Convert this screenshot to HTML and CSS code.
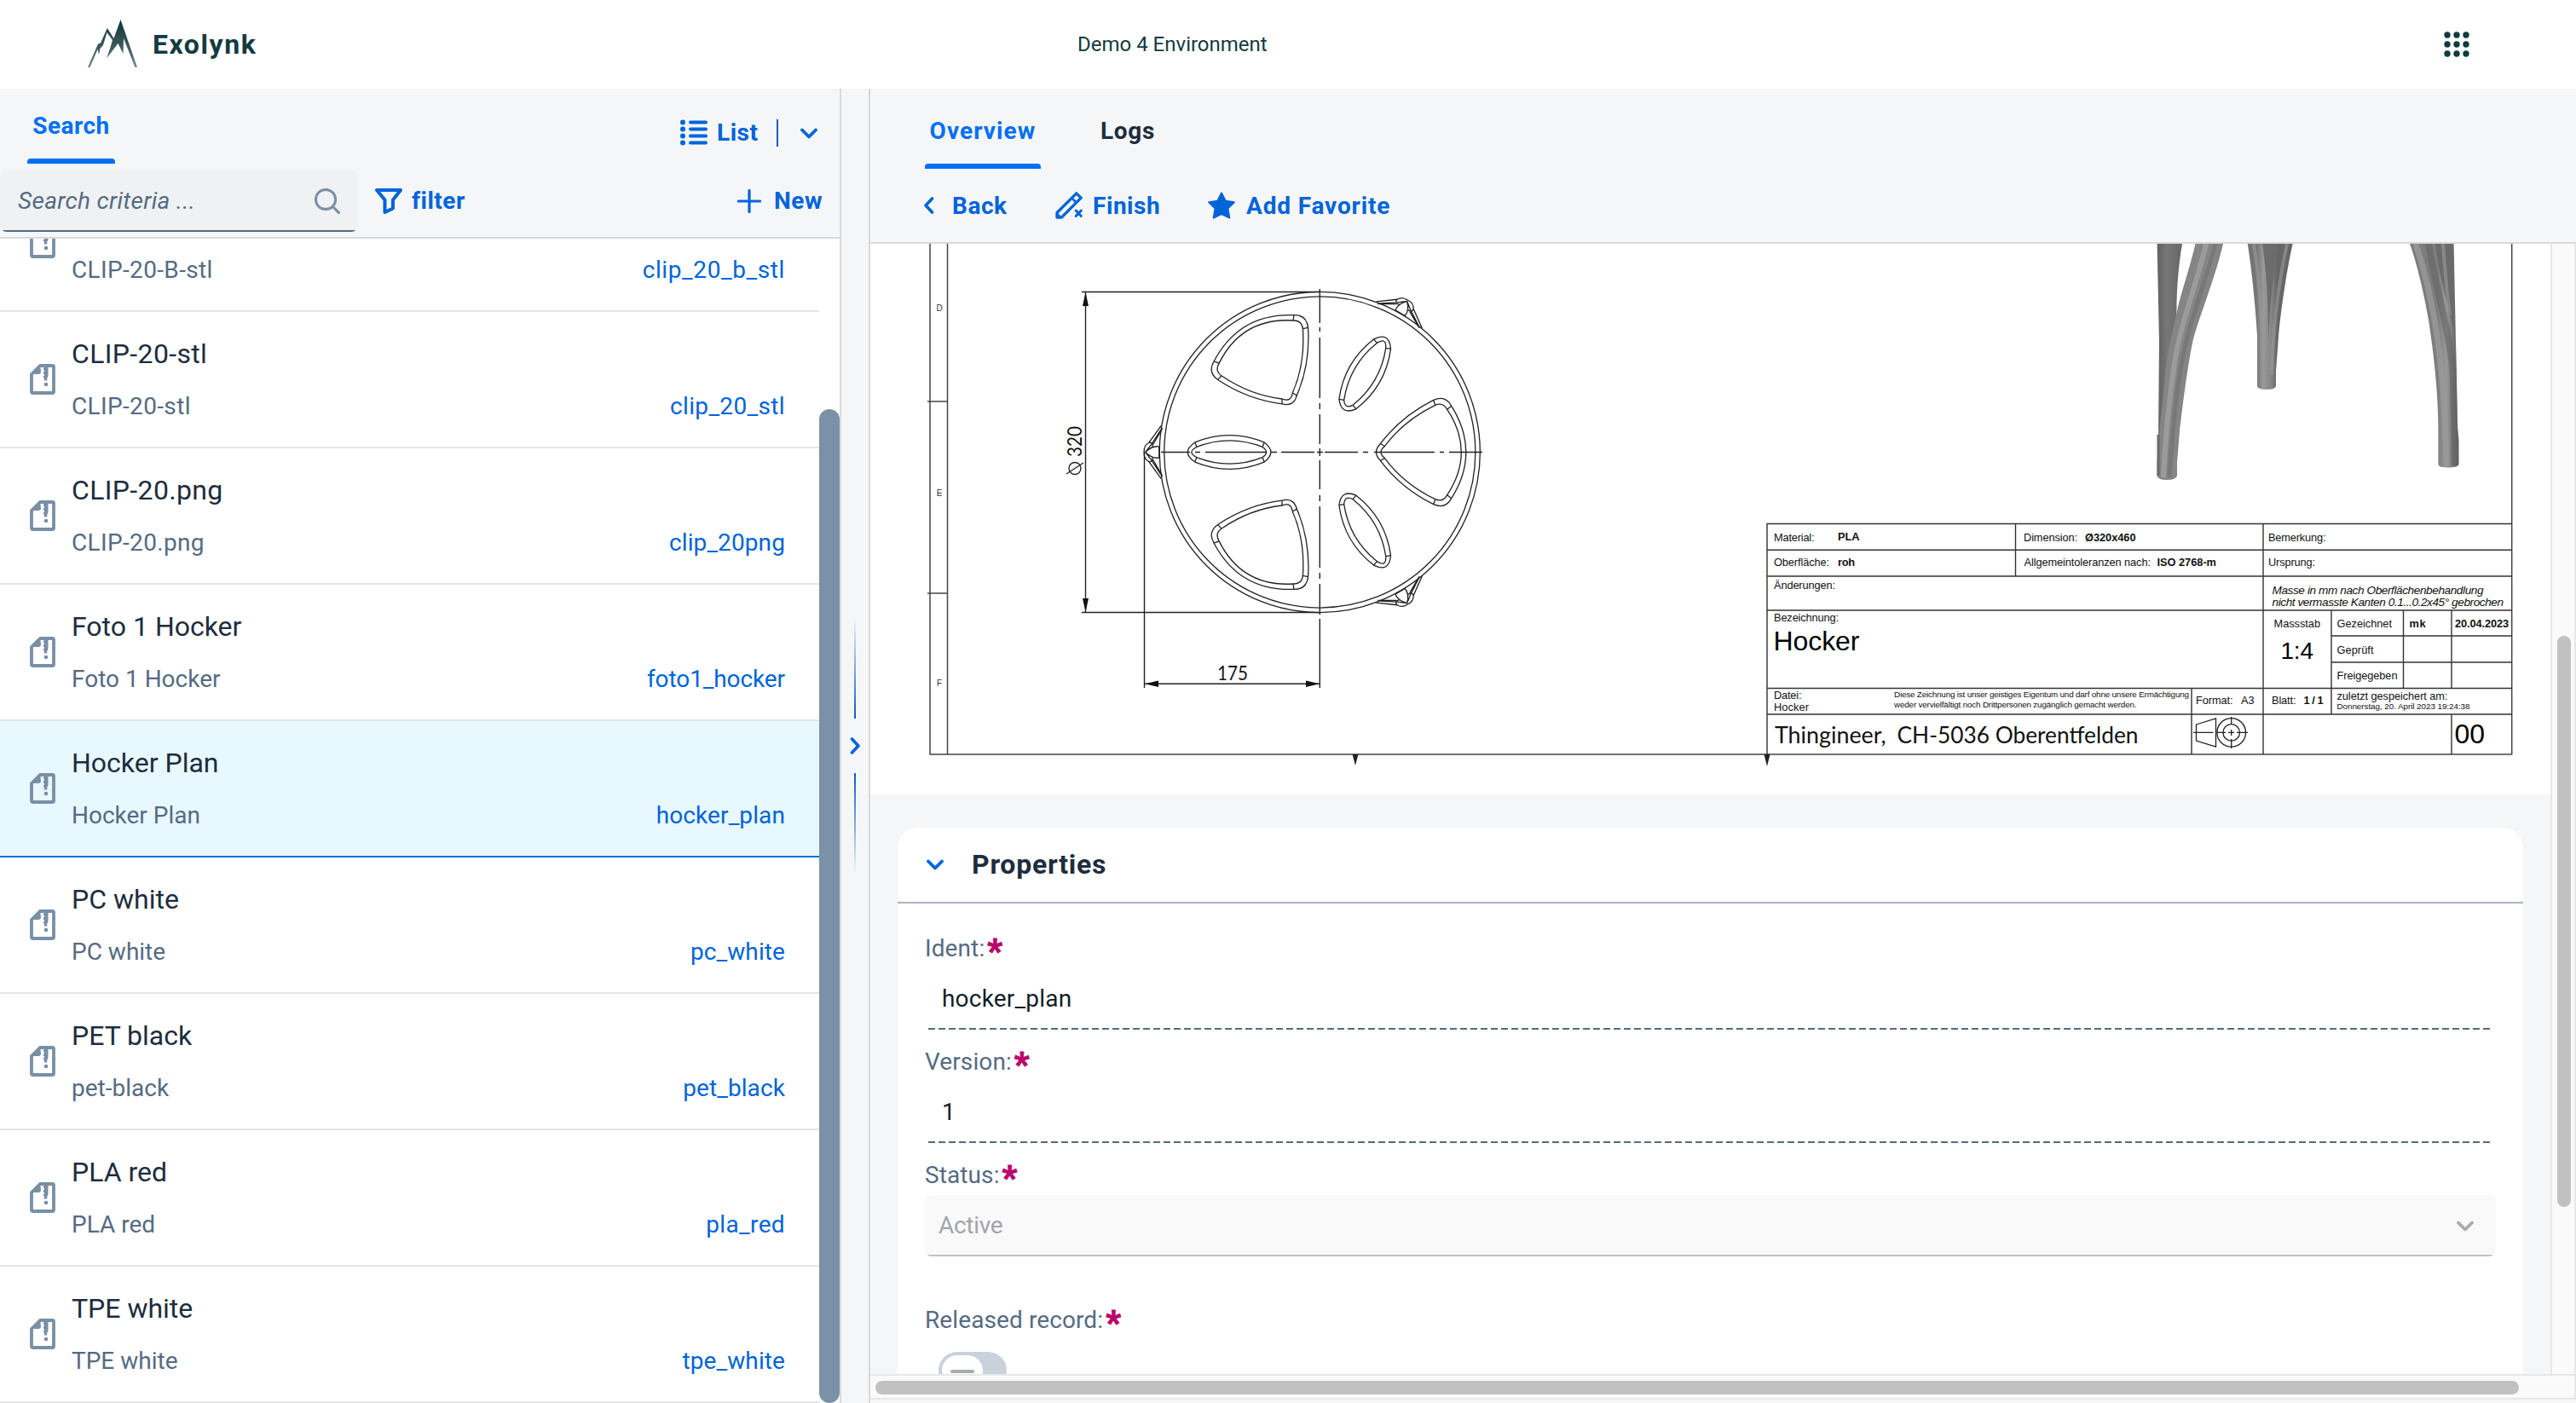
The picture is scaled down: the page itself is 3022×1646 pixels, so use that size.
FILE: index.html
```
<!DOCTYPE html>
<html lang="en">
<head>
<meta charset="utf-8">
<title>Exolynk</title>
<link rel="stylesheet" href="styles.css">
</head>
<body>
<svg class="defs" width="0" height="0" aria-hidden="true">
  <symbol id="i-file" viewBox="0 0 30 36">
    <path d="M12 2H26.5Q28 2 28 3.500V32.500Q28 34 26.500 34H3.500Q2 34 2 32.500V12Z" fill="none" stroke="#788fa6" stroke-width="3.800" stroke-linejoin="round"/>
    <path d="M12 1L1 12H10Q13 12 13 9Z" fill="#788fa6"/>
    <path d="M17 4h2v2h2v2h-2v2h2v2h-2v2h2v2h-2v3h-2v-3h-1v-2h1v-2h-1V9h1V7h-1V5z" fill="#788fa6"/>
    <path d="M19.500 4V14.500" stroke="#788fa6" stroke-width="4"/>
    <path d="M18.500 14V19.500" stroke="#788fa6" stroke-width="3.500"/>
    <circle cx="19" cy="24" r="2.300" fill="#788fa6"/>
  </symbol>
  <symbol id="i-down" viewBox="0 0 20 13"><path d="M2 2.500L10 10.500L18 2.500" fill="none" stroke="currentColor" stroke-width="3.800" stroke-linecap="round" stroke-linejoin="round"/></symbol>
</svg>

<header class="shell">
  <a class="brand">
    <svg class="logo" viewBox="0 0 58 58">
      <defs><linearGradient id="lg" x1="0" y1="0" x2="0" y2="1"><stop offset="0" stop-color="#0d3438"/><stop offset=".6" stop-color="#3f5d60"/><stop offset="1" stop-color="#6f8786"/></linearGradient></defs>
      <path d="M38.500 0L58 56H55.500L42 22L41.500 40L35.500 28L22 45.500L26 34L29 24L22.500 15L18 30L14.500 34L13 41L11.500 35L2.500 56H0L12 28.500L15 27.500L22.800 10L30.500 22Z" fill="url(#lg)"/>
    </svg>
    <span class="brand-name">Exolynk</span>
  </a>
  <span class="env">Demo 4 Environment</span>
  <svg class="apps" viewBox="0 0 30 30" fill="#123b40"><circle cx="4" cy="4" r="3.700"/><circle cx="15" cy="4" r="3.700"/><circle cx="26" cy="4" r="3.700"/><circle cx="4" cy="15" r="3.700"/><circle cx="15" cy="15" r="3.700"/><circle cx="26" cy="15" r="3.700"/><circle cx="4" cy="26" r="3.700"/><circle cx="15" cy="26" r="3.700"/><circle cx="26" cy="26" r="3.700"/></svg>
</header>

<main class="layout">
  <aside class="master">
    <div class="master-head">
      <div class="tabrow">
        <a class="tab tab-search on">Search</a>
        <div class="viewmode">
          <svg class="ic32" viewBox="0 0 32 32"><g fill="#0064d9"><circle cx="3" cy="3.500" r="3"/><circle cx="3" cy="11.500" r="3"/><circle cx="3" cy="19.500" r="3"/><circle cx="3" cy="27.500" r="3"/></g><path d="M12 3.500H30M12 11.500H30M12 19.500H30M12 27.500H30" stroke="#0064d9" stroke-width="4" stroke-linecap="round"/></svg>
          <span class="b">List</span>
          <i class="split"></i>
          <svg class="down"><use href="#i-down"/></svg>
        </div>
      </div>
      <div class="searchrow">
        <div class="searchbox">
          <span>Search criteria ...</span>
          <svg class="mag" viewBox="0 0 30 30" fill="none" stroke="#788fa6" stroke-width="3"><circle cx="13" cy="13" r="11.600"/><path d="M21.500 21.500L28.600 28.600" stroke-linecap="round"/></svg>
        </div>
        <svg class="ic32" viewBox="0 0 32 32"><path d="M2 3H30L21 14.500V24.500L11.500 29V14.500Z" fill="none" stroke="#0064d9" stroke-width="4" stroke-linejoin="round"/></svg>
        <span class="b filter">filter</span>
        <svg class="plus" viewBox="0 0 28 28"><path d="M1.500 14H26.500M14 1.500V26.500" stroke="#0064d9" stroke-width="3.200" stroke-linecap="round"/></svg>
        <span class="b new">New</span>
      </div>
    </div>
    <div class="list-wrap">
      <ul class="list">
        <li class="row"><svg class="file"><use href="#i-file"/></svg><div class="txt"><b></b><span class="sub wide">CLIP-20-B-stl</span></div><a class="lnk wider">clip_20_b_stl</a></li>
        <li class="row"><svg class="file"><use href="#i-file"/></svg><div class="txt"><b class="wide">CLIP-20-stl</b><span class="sub wide">CLIP-20-stl</span></div><a class="lnk wide">clip_20_stl</a></li>
        <li class="row"><svg class="file"><use href="#i-file"/></svg><div class="txt"><b class="wide">CLIP-20.png</b><span class="sub wide">CLIP-20.png</span></div><a class="lnk">clip_20png</a></li>
        <li class="row"><svg class="file"><use href="#i-file"/></svg><div class="txt"><b>Foto 1 Hocker</b><span class="sub">Foto 1 Hocker</span></div><a class="lnk tight">foto1_hocker</a></li>
        <li class="row sel"><svg class="file"><use href="#i-file"/></svg><div class="txt"><b>Hocker Plan</b><span class="sub">Hocker Plan</span></div><a class="lnk">hocker_plan</a></li>
        <li class="row"><svg class="file"><use href="#i-file"/></svg><div class="txt"><b>PC white</b><span class="sub">PC white</span></div><a class="lnk">pc_white</a></li>
        <li class="row"><svg class="file"><use href="#i-file"/></svg><div class="txt"><b>PET black</b><span class="sub">pet-black</span></div><a class="lnk">pet_black</a></li>
        <li class="row"><svg class="file"><use href="#i-file"/></svg><div class="txt"><b>PLA red</b><span class="sub">PLA red</span></div><a class="lnk wide">pla_red</a></li>
        <li class="row"><svg class="file"><use href="#i-file"/></svg><div class="txt"><b>TPE white</b><span class="sub">TPE white</span></div><a class="lnk">tpe_white</a></li>
      </ul>
      <div class="list-scroll"><div class="list-thumb"></div></div>
    </div>
  </aside>

  <div class="splitter">
    <i class="grip up"></i>
    <svg class="grip-arrow" viewBox="0 0 13 20"><path d="M2.500 2L10 10L2.500 18" fill="none" stroke="#0064d9" stroke-width="3.600" stroke-linecap="round" stroke-linejoin="round"/></svg>
    <i class="grip dn"></i>
  </div>

  <section class="detail">
    <div class="detail-head">
      <nav class="tabs"><a class="tab tab-over on">Overview</a><a class="tab tab-logs">Logs</a></nav>
      <div class="tools">
        <svg class="back" viewBox="0 0 13 20"><path d="M10.500 2L3 10L10.500 18" fill="none" stroke="#0064d9" stroke-width="3.600" stroke-linecap="round" stroke-linejoin="round"/></svg>
        <span class="b">Back</span>
        <svg class="ic32" viewBox="0 0 32 32"><g fill="none" stroke="#0064d9" stroke-width="3.300" stroke-linejoin="round"><path d="M24.800 1.800L30.200 7.200L7.500 30H2V24.500Z"/><path d="M19.500 7.500L24.500 12.500" stroke-width="2.500"/><path d="M24.200 22L30.300 28.500M30.300 22L24.200 28.500" stroke-linecap="round" stroke-width="3"/></g><path d="M1 23L9 31H1Z" fill="#0064d9"/></svg>
        <span class="b">Finish</span>
        <svg class="ic32" viewBox="0 0 32 32"><path d="M16 1.500L20.700 10.800L30.800 12.300L23.400 19.500L25.300 30.500L16 26.200L6.700 30.500L8.600 19.500L1.200 12.300L11.300 10.800Z" fill="#0064d9" stroke="#0064d9" stroke-width="2" stroke-linejoin="round"/></svg>
        <span class="b fav">Add Favorite</span>
      </div>
    </div>

    <div class="scroller">
      <div class="content">
        <svg class="drawing" viewBox="1021 286 1971 646" xmlns="http://www.w3.org/2000/svg">
          <defs>
            <linearGradient id="g1" gradientUnits="userSpaceOnUse" x1="2530" y1="0" x2="2560" y2="0"><stop offset="0" stop-color="#5f5f5f"/><stop offset=".4" stop-color="#777"/><stop offset="1" stop-color="#666"/></linearGradient>
            <linearGradient id="g2" gradientUnits="userSpaceOnUse" x1="2647" y1="0" x2="2671" y2="0"><stop offset="0" stop-color="#757575"/><stop offset=".35" stop-color="#999"/><stop offset=".75" stop-color="#858585"/><stop offset="1" stop-color="#666"/></linearGradient>
            <linearGradient id="g3" gradientUnits="userSpaceOnUse" x1="2860" y1="0" x2="2885" y2="0"><stop offset="0" stop-color="#7d7d7d"/><stop offset=".4" stop-color="#999"/><stop offset=".8" stop-color="#6d6d6d"/><stop offset="1" stop-color="#5c5c5c"/></linearGradient>
            <g id="tri">
              <path d="M71 -10Q95 -42 133 -61Q147 -67 154 -54Q188 0 154 54Q147 67 133 61Q95 42 71 10Q61 0 71 -10Z"/>
              <path d="M76 -7Q98 -37 135 -55Q144 -59 149 -50Q182 0 149 50Q144 59 135 55Q98 37 76 7Q67 0 76 -7Z"/>
              <path d="M71 -10L76 -7M71 10L76 7M133 -61L135 -55M133 61L135 55M154 -54L149 -50M154 54L149 50"/>
            </g>
            <g id="lens">
              <path d="M-146 -11.500Q-105.600 -28 -65 -11.500Q-49.500 0 -65 11.500Q-105.600 28 -146 11.500Q-163 0 -146 -11.500Z"/>
              <path d="M-144 -6Q-105.600 -21 -67 -6Q-58 0 -67 6Q-105.600 21 -144 6Q-156 0 -144 -6Z"/>
              <path d="M-146 -11.500L-144 -6M-146 11.500L-144 6M-65 -11.500L-67 -6M-65 11.500L-67 6"/>
            </g>
            <g id="foot">
              <path d="M-185.500 -31L-200 -11Q-206 -8 -205.500 0Q-206 8 -200 11L-185.500 31M-186 -26L-197 -9M-186 26L-197 9M-184 -28L-195 -9M-184 28L-195 9M-188 -6.500Q-196 -8 -204 0Q-196 8 -188 6.500V-6.500M-200 -11Q-194 -12 -196 -6M-200 11Q-194 12 -196 6M-204 0L-197 -9M-204 0L-197 9"/>
            </g>
          </defs>

          <!-- sheet frame -->
          <g fill="none" stroke="#444" stroke-width="1.500">
            <path d="M1091 286V885H2946.700V286M1111.500 286V885M1088 471H1111.500M1088 696H1111.500"/>
          </g>
          <path d="M1586.500 885H1593.500L1590 898ZM2069.500 885H2076.500L2073 899Z" fill="#222"/>
          <g class="mark" text-anchor="middle"><text x="1102" y="365">D</text><text x="1102" y="582">E</text><text x="1102" y="805">F</text></g>

          <!-- seat, top view -->
          <g transform="translate(1548.300 530.500) scale(1.003)" fill="none" stroke="#222" stroke-width="1.300">
            <circle r="187.500"/><circle r="182"/>
            <use href="#tri"/><use href="#tri" transform="rotate(120)"/><use href="#tri" transform="rotate(240)"/>
            <use href="#lens"/><use href="#lens" transform="rotate(120)"/><use href="#lens" transform="rotate(240)"/>
            <use href="#foot"/><use href="#foot" transform="rotate(120)"/><use href="#foot" transform="rotate(240)"/>
          </g>
          <g fill="none" stroke="#222" stroke-width="1.400">
            <path d="M1548.300 339V379M1548.300 384V389M1548.300 396V467M1548.300 473V480M1548.300 486V521M1548.300 526V535M1548.300 540V574M1548.300 581V588M1548.300 594V666M1548.300 672V679M1548.300 685V721M1548.300 726V807"/>
            <path d="M1362 530.500H1396M1402 530.500H1408M1414 530.500H1485M1491 530.500H1498M1503 530.500H1542M1545 530.500H1552M1554 530.500H1593M1599 530.500H1605M1612 530.500H1683M1689 530.500H1694M1700 530.500H1739"/>
            <path d="M1269 342.500H1548M1269 718.500H1548M1273.500 342.500V718.500M1342.500 530V807M1342.500 802.300H1548.300"/>
          </g>
          <path d="M1273.500 343L1277 359H1270ZM1273.500 718L1277 702H1270ZM1343 802.300L1359 798.500V806.100ZM1548 802.300L1532 798.500V806.100Z" fill="#111"/>
          <g class="dim">
            <text x="1428" y="797.500" textLength="36" lengthAdjust="spacingAndGlyphs">175</text>
            <text transform="translate(1269 536) rotate(-90)" textLength="36" lengthAdjust="spacingAndGlyphs">320</text>
            <path d="M1251 556L1271 543" stroke="#222" stroke-width="1.300"/><circle cx="1261" cy="549.500" r="7" fill="none" stroke="#222" stroke-width="1.400"/>
          </g>

          <!-- stool legs -->
          <g>
            <path d="M2530.600 286H2560C2556 310 2553 340 2553.500 372L2548 450L2540 555H2532V520L2533 400Z" fill="url(#g1)"/>
            <path d="M2575.500 286H2608C2600 322 2580 372 2573 398C2566 430 2560 480 2557 506L2554 543V558Q2553 563 2542 563Q2531 563 2530.500 558V543L2532 520C2534 495 2540 447 2541 430C2544 405 2553 372 2555 360C2560 340 2570 310 2575.500 286Z" fill="#858585"/>
            <path d="M2599 286C2590 322 2571 372 2565 400C2556 435 2549 500 2545 560" fill="none" stroke="#707070" stroke-width="5" opacity=".6"/>
            <path d="M2588 286C2580 322 2562 372 2556 400C2548 435 2541 500 2538 560" fill="none" stroke="#a3a3a3" stroke-width="6" opacity=".75"/>
            <path d="M2532 510V558" stroke="#696969" stroke-width="3"/>
            <path d="M2636.800 286H2689.600C2682 320 2675 370 2673 395L2670 436V453Q2669 457 2659 457Q2648.500 457 2648 453V394C2646 360 2642 320 2636.800 286Z" fill="url(#g2)"/>
            <path d="M2654 286Q2661 330 2661 400Q2664 330 2674 286Z" fill="#6c6c6c"/>
            <path d="M2644 286Q2654 350 2655 450" fill="none" stroke="#969696" stroke-width="4" opacity=".7"/>
            <path d="M2683 286Q2667 360 2665 440" fill="none" stroke="#999" stroke-width="4" opacity=".6"/>
            <path d="M2853 286H2878.600L2881 402L2882 470L2868 400Z" fill="#6b6b6b"/>
            <path d="M2866 286Q2869 330 2874 370" fill="none" stroke="#888" stroke-width="4"/>
            <path d="M2827 286H2857C2860 320 2876 370 2881 402L2883 500L2884.500 517V545Q2883 548.500 2872 548.500Q2861 548.500 2860.400 545V500C2860 450 2853 402 2849 375C2843 340 2834 305 2827 286Z" fill="url(#g3)"/>
            <path d="M2834 286C2852 340 2867 410 2870 546" fill="none" stroke="#9a9a9a" stroke-width="7" opacity=".8"/>
            <path d="M2849 286C2858 340 2874 390 2878 440L2880 546" fill="none" stroke="#646464" stroke-width="8" opacity=".6"/>
          </g>

          <!-- title block -->
          <path d="M2073 885V614.500H2946.700M2073 645.300H2946.700M2073 676H2946.700M2073 716H2946.700M2073 807.500H2946.700M2073 838H2946.700M2364.500 614.500V676M2655 614.500V885M2735 716V838M2819.500 716V807.500M2876 716V807.500M2876 838V885M2571 807.500V885M2735 746H2946.700M2735 777H2946.700" fill="none" stroke="#333" stroke-width="1.400"/>
          <g class="tb">
            <text x="2081" y="634.700" textLength="47.500">Material:</text><text class="tbb" x="2156" y="633.700" textLength="25.500">PLA</text>
            <text x="2081" y="664" textLength="65">Oberfläche:</text><text class="tbb" x="2156" y="664" textLength="20">roh</text>
            <text x="2081" y="691.300" textLength="72">Änderungen:</text>
            <text x="2081" y="729" textLength="76">Bezeichnung:</text>
            <text class="big" x="2080.500" y="762.700" textLength="101">Hocker</text>
            <text x="2081" y="820.300" textLength="32.500">Datei:</text><text x="2081" y="833.700" textLength="41">Hocker</text>
            <text class="tiny" x="2222" y="818.300" textLength="346">Diese Zeichnung ist unser geistiges Eigentum und darf ohne unsere Ermächtigung</text>
            <text class="tiny" x="2222" y="830.300" textLength="284.500">weder vervielfältigt noch Drittpersonen zugänglich gemacht werden.</text>
            <text class="firm" x="2082" y="872.300" textLength="130.500" lengthAdjust="spacingAndGlyphs">Thingineer,</text>
            <text class="firm" x="2225.500" y="872.300" textLength="283" lengthAdjust="spacingAndGlyphs">CH-5036 Oberentfelden</text>
            <text x="2374" y="634.700" textLength="63">Dimension:</text><text class="tbb" x="2446" y="634.700" textLength="59.500">Ø320x460</text>
            <text x="2374.500" y="664" textLength="148.500">Allgemeintoleranzen nach:</text><text class="tbb" x="2530.500" y="664" textLength="69.500">ISO 2768-m</text>
            <text x="2661" y="635" textLength="67.500">Bemerkung:</text>
            <text x="2661" y="664" textLength="55">Ursprung:</text>
            <text class="it" x="2665.500" y="697" textLength="248">Masse in mm nach Oberflächenbehandlung</text>
            <text class="it" x="2665.500" y="711.300" textLength="271.500">nicht vermasste Kanten 0.1...0.2x45° gebrochen</text>
            <text x="2667.500" y="735.600" textLength="54.500">Massstab</text>
            <text class="scale" x="2675.500" y="773" textLength="38.500">1:4</text>
            <text x="2741.500" y="735.700" textLength="64.500">Gezeichnet</text><text class="tbb" x="2826.500" y="735.600" textLength="19">mk</text><text class="tbb" x="2880" y="735.600" textLength="63">20.04.2023</text>
            <text x="2741.500" y="766.700" textLength="43">Geprüft</text>
            <text x="2741.500" y="796.700" textLength="71">Freigegeben</text>
            <text x="2576" y="826" textLength="43.500">Format:</text><text x="2629" y="826" textLength="15.500">A3</text>
            <text x="2665" y="826" textLength="28.500">Blatt:</text><text class="tbb" x="2702.500" y="826" textLength="23">1 / 1</text>
            <text x="2741.500" y="821" textLength="130">zuletzt gespeichert am:</text>
            <text class="tiny" x="2741.500" y="831.700" textLength="156">Donnerstag, 20. April 2023 19:24:38</text>
            <text class="big" x="2879.500" y="872.400" textLength="35.500">00</text>
          </g>
          <g fill="none" stroke="#222" stroke-width="1.300">
            <path d="M2576.500 850L2599.500 843V876L2576.500 869ZM2573 859.400H2596.500M2601 859.400H2611M2614 859.400H2621M2624 859.400H2637M2617.700 841V850M2617.700 856V863M2617.700 867V878"/>
            <circle cx="2617.700" cy="859.400" r="16.800"/><circle cx="2617.700" cy="859.400" r="9.800"/>
          </g>
        </svg>

        <div class="card">
          <div class="card-head"><svg class="down"><use href="#i-down"/></svg><h2>Properties</h2></div>
          <div class="form">
            <label>Ident:<em>*</em></label>
            <div class="ro">hocker_plan</div>
            <label>Version:<em>*</em></label>
            <div class="ro">1</div>
            <label>Status:<em>*</em></label>
            <div class="select"><span>Active</span><svg class="down"><use href="#i-down"/></svg></div>
            <label class="rel">Released record:<em>*</em></label>
            <div class="switch"><div class="knob"><i></i></div></div>
          </div>
        </div>
      </div>
      <div class="vbar"><div class="vthumb"></div></div>
      <div class="hbar"><div class="hthumb"></div></div>
    </div>
  </section>
</main>
</body>
</html>
```
FILE: styles.css
```
* { box-sizing: border-box; }
body { margin: 0; width: 3022px; height: 1646px; overflow: hidden; display: flex; flex-direction: column; background: #f5f6f7; font: 400 28px/36px Roboto, "Noto Sans", sans-serif; letter-spacing: .1px; color: #1d2d3e; }
svg { display: block; flex: none; }
.defs { position: absolute; }
ul { list-style: none; margin: 0; padding: 0; }

/* shell bar */
.shell { height: 104px; flex: none; background: #fff; display: grid; grid-template-columns: 1264px 1fr 30px; align-items: center; padding-right: 125px; color: #123b40; }
.brand { display: flex; align-items: center; padding-left: 103px; }
.logo { width: 58px; height: 58px; margin-right: 18px; }
.brand-name { font-weight: 700; font-size: 32px; letter-spacing: 1.55px; }
.env { font-size: 24px; letter-spacing: 0; }
.apps { width: 30px; height: 30px; }

.layout { flex: 1; min-height: 0; display: flex; }

/* left panel */
.master { width: 987px; flex: none; border-right: 2px solid #d9d9d9; display: flex; flex-direction: column; background: #fff; }
.master-head { height: 176px; flex: none; background: #f5f6f7; border-bottom: 2px solid #d9d9d9; }
.tabrow { height: 88px; display: flex; justify-content: space-between; padding-left: 32px; }
.tab { display: block; font-weight: 700; text-align: center; letter-spacing: .5px; }
.on { color: #0070f2; }
.on::after { content: ""; display: block; height: 6px; background: #0070f2; border-radius: 4px 4px 0 0; }
.tab-search { width: 103px; padding-top: 6px; line-height: 76px; }
.viewmode { display: grid; grid-template-columns: 43px 70px 28px 46px; align-items: center; height: 88px; padding-top: 16px; }
.b { font-weight: 700; color: #0064d9; letter-spacing: .5px; }
.ic32 { width: 32px; height: 32px; }
.split { width: 2px; height: 32px; background: #0a5cc0; }
.down { width: 20px; height: 13px; color: #0064d9; }
.searchrow { padding-top: 8px; height: 80px; display: grid; grid-template-columns: 420px 20px 43px 382px 43px 77px; align-items: center; }
.searchrow > .ic32 { grid-column: 3; }
.searchbox { height: 72px; display: flex; align-items: center; justify-content: space-between; background: linear-gradient(#556b82, #556b82) 3px 70px / 414px 2px no-repeat #eff1f2; border-radius: 8px; padding: 0 21px; color: #556b82; font-style: italic; letter-spacing: .3px; }
.mag { width: 30px; height: 30px; }
.plus { width: 28px; height: 28px; }

.list-wrap { flex: 1; min-height: 0; display: flex; }
.list { width: 961px; display: flex; flex-direction: column; justify-content: flex-end; overflow: hidden; }
.row { height: 160px; flex: none; display: flex; border-bottom: 2px solid #e5e5e5; padding: 0 40px 0 35px; }
.row.sel { background: #e8f8ff; border-bottom-color: #0a6ed1; }
.file { width: 30px; height: 36px; margin: 61px 18px 0 0; }
.txt { flex: 1; display: flex; flex-direction: column; padding: 29px 0 0 1px; letter-spacing: 0; }
.txt b { font-weight: 400; font-size: 32px; line-height: 40px; min-height: 40px; }
.sub { margin-top: 24px; color: #556b82; }
.lnk { color: #0064d9; margin-top: 93px; }
.wide { letter-spacing: .35px; }
.wider { letter-spacing: .6px; }
.tight { letter-spacing: -.1px; }
.list-scroll { flex: 1; padding-top: 200px; }
.list-thumb { height: 100%; background: #7b91a8; border-radius: 12px; }

/* splitter */
.splitter { width: 32px; flex: none; display: flex; flex-direction: column; align-items: center; padding-top: 621px; }
.grip { width: 2px; height: 118px; }
.up { background: linear-gradient(to top, #0a5cc0, rgba(10, 92, 192, 0)); }
.dn { background: linear-gradient(to bottom, #0a5cc0, rgba(10, 92, 192, 0)); }
.grip-arrow { width: 13px; height: 20px; margin: 22px 0; }

/* right panel */
.detail { flex: 1; min-width: 0; border-left: 2px solid #d9d9d9; display: flex; flex-direction: column; }
.detail-head { height: 182px; flex: none; border-bottom: 2px solid #d9d9d9; }
.tabs { height: 94px; display: flex; padding-left: 64px; gap: 70px; line-height: 76px; }
.tab-over { width: 136px; padding-top: 12px; letter-spacing: 1.1px; }
.tab-logs { padding-top: 12px; letter-spacing: .7px; }
.tools { height: 86px; display: grid; grid-template-columns: 34px 121px 44px 135px 45px 200px; align-items: center; padding-left: 62px; }
.tools .b { letter-spacing: .55px; padding-top: 2px; }
.tools .fav { letter-spacing: .85px; }
.back { width: 13px; height: 20px; }

.scroller { flex: 1; min-height: 0; display: grid; grid-template: 1326px 34px / 1971px 30px; }
.content { overflow: hidden; }
.drawing { width: 1971px; height: 646px; background: #fff; }
.drawing text { letter-spacing: 0; }
.mark { font: 10px "Liberation Sans", sans-serif; fill: #333; }
.dim { font: 400 23px Lato, "Noto Sans", sans-serif; fill: #111; }
.tb { font: 12.8px "Liberation Sans", Arial, sans-serif; fill: #111; }
.tbb { font-weight: 700; }
.big { font-size: 32px; fill: #000; }
.scale { font-size: 28px; fill: #000; }
.tiny { font-size: 9.9px; }
.it { font-size: 13.6px; font-style: italic; }
.firm { font: 400 27px Lato, "Noto Sans", sans-serif; }

.card { margin: 39px 32px 0; height: 800px; background: #fff; border-radius: 24px 24px 0 0; }
.card-head { height: 89px; border-bottom: 2px solid #a9b4be; display: grid; grid-template-columns: 53px 1fr; align-items: center; padding-left: 34px; }
.card-head h2 { margin: 0; font-size: 32px; font-weight: 700; letter-spacing: .75px; padding-bottom: 1px; }
.form { padding: 32px 32px 0; display: flex; flex-direction: column; }
label { display: flex; line-height: 42px; color: #556b82; letter-spacing: .1px; height: 40px; }
em { font: 900 38px/49px Roboto, sans-serif; color: #ba066c; margin-left: 3px; letter-spacing: 0; -webkit-text-stroke: 1px #ba066c; }
.ro { height: 76px; margin-bottom: 17px; padding: 22px 20px 0; color: #131e29; letter-spacing: .2px; background: repeating-linear-gradient(90deg, #556b82 0 8px, transparent 8px 12px) 4px 74px / 1836px 2px no-repeat; }
.select { height: 72px; margin-top: 4px; padding: 0 26px 0 16px; display: flex; align-items: center; justify-content: space-between; border-radius: 8px; background: linear-gradient(#bcc3ca, #bcc3ca) 3px 70px / 1837px 2px no-repeat #f9f9f9; color: #a1a5a9; letter-spacing: -.3px; }
.select .down { color: #a5abb2; }
.rel { margin-top: 54px; }
.switch { width: 80px; height: 44px; margin: 18px 0 0 16px; background: #c9d1dd; border-radius: 22px; padding: 4px; }
.knob { width: 48px; height: 36px; border-radius: 18px; background: #fff; display: flex; justify-content: center; padding-top: 17px; }
.knob i { width: 28px; height: 4px; background: #a5abb2; border-radius: 2px; }

/* scrollbars of the detail pane */
.vbar { border: 2px solid #e8e8e8; border-width: 0 2px; background: #fafafa; padding: 460px 4px 0 6px; }
.vthumb { width: 16px; height: 670px; border-radius: 8px; background: #c1c1c1; }
.hbar { grid-column: 1 / 3; height: 30px; border: 2px solid #e8e8e8; border-left: 0; background: #fafafa; padding: 6px 0 0 6px; }
.hthumb { width: 1928px; height: 16px; border-radius: 8px; background: #c1c1c1; }
```
